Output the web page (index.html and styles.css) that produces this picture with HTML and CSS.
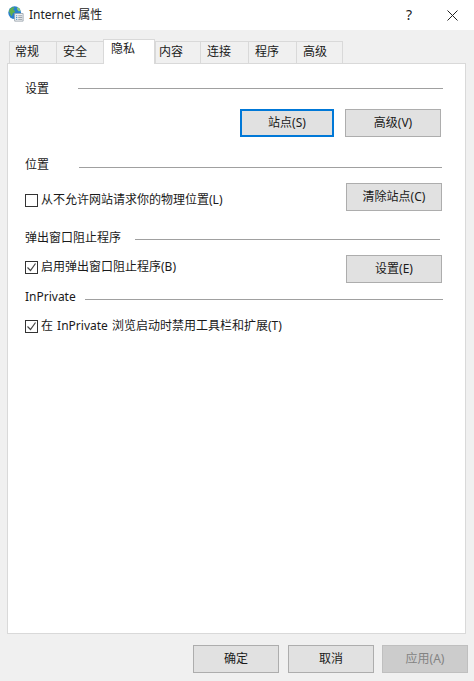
FILE: index.html
```html
<!DOCTYPE html>
<html lang="zh-CN">
<head>
<meta charset="utf-8">
<title>Internet 属性</title>
<link rel="stylesheet" href="styles.css">
</head>
<body>
<div class="dialog">
  <header class="titlebar">
    <svg class="app-icon" width="16" height="16" viewBox="0 0 18 18">
      <circle cx="7.500" cy="7.500" r="7.200" fill="#2a80cc"/>
      <path d="M3 2.500c1.500-1 3-1.500 4-1 .5 1-.5 2-1.500 2.500 1 1 2.500 1 2.500 2.500-1 1.500-2.500 1-3 2.500 0 1.500-.5 2.500-1.500 2-1-1.500-.8-3-2-4-.5-1.500 0-3 1.500-4.500z" fill="#5fb04c"/>
      <path d="M10 1.500c2 .5 3.500 2 4 4l-2 .5c-1-1-2-2-2-4.500z" fill="#8ecf72"/>
      <path d="M7.500 8.500h9.500v8.500H7.500z" fill="#f4f6f8" stroke="#9aa3ab"/>
      <path d="M9 11h1.500M9 13h1.500M9 15h1.500" stroke="#2b7fc4"/>
      <path d="M11.500 11H16M11.500 13H16M11.500 15H16" stroke="#8b949c"/>
    </svg>
    <span class="title-text">Internet 属性</span>
    <span class="help">?</span>
    <svg class="close" width="11" height="11" viewBox="0 0 11 11"><path d="M.5.500l10 10M10.500.500l-10 10" stroke="#222" fill="none"/></svg>
  </header>

  <nav class="tabs">
    <span class="tab tab-first">常规</span>
    <span class="tab tab-a">安全</span>
    <span class="tab tab-active">隐私</span>
    <span class="tab tab-b">内容</span>
    <span class="tab tab-wide">连接</span>
    <span class="tab tab-wide">程序</span>
    <span class="tab tab-a">高级</span>
  </nav>

  <main class="panel">
    <section class="sec sec-settings">
      <div class="head"><span class="label">设置</span><span class="rule r1"></span></div>
      <div class="btn-row">
        <button class="btn btn-focus">站点(S)</button>
        <button class="btn btn-adv">高级(V)</button>
      </div>
    </section>

    <section class="sec sec-location">
      <div class="head"><span class="label">位置</span><span class="rule r2"></span></div>
      <div class="opt-row">
        <label class="check check-loc"><span class="box"></span>从不允许网站请求你的物理位置(L)</label>
        <button class="btn">清除站点(C)</button>
      </div>
    </section>

    <section class="sec sec-popup">
      <div class="head"><span class="label">弹出窗口阻止程序</span><span class="rule r3"></span></div>
      <div class="opt-row">
        <label class="check check-pop"><span class="box"><svg width="11" height="11" viewBox="0 0 11 11"><path d="M1.500 5.500l3 3 5-7" stroke="#444" stroke-width="1.200" fill="none"/></svg></span>启用弹出窗口阻止程序(B)</label>
        <button class="btn">设置(E)</button>
      </div>
    </section>

    <section class="sec sec-private">
      <div class="head"><span class="label">InPrivate</span><span class="rule r4"></span></div>
      <label class="check check-priv"><span class="box"><svg width="11" height="11" viewBox="0 0 11 11"><path d="M1.500 5.500l3 3 5-7" stroke="#444" stroke-width="1.200" fill="none"/></svg></span>在 InPrivate 浏览启动时禁用工具栏和扩展(T)</label>
    </section>
  </main>

  <footer class="footer">
    <button class="btn btn-foot">确定</button>
    <button class="btn btn-foot">取消</button>
    <button class="btn btn-foot btn-disabled" disabled>应用(A)</button>
  </footer>
</div>
</body>
</html>
```

FILE: styles.css
```css
* { box-sizing: border-box; }
html, body { margin: 0; padding: 0; }
body {
  width: 474px;
  height: 681px;
  overflow: hidden;
  font: 12px/16px "Noto Sans", "Noto Sans CJK SC", sans-serif;
  color: #1a1a1a;
  background: #f0f0f0;
}
.dialog { display: flex; flex-direction: column; height: 681px; }

.titlebar {
  flex: none;
  height: 30px;
  background: #fff;
  display: flex;
  align-items: center;
  padding: 0 16px 0 8px;
}
.app-icon { flex: none; margin: 0 5px 2px 0; }
.title-text { flex: 1; color: #222; }
.help { font-size: 14px; color: #222; margin-right: 35px; }
.close { flex: none; }

.tabs {
  flex: none;
  height: 33px;
  padding-left: 9px;
  display: flex;
  align-items: flex-end;
  position: relative;
  z-index: 1;
}
.tab {
  height: 22px;
  border: 1px solid #d9d9d9;
  border-right: 0;
  border-bottom: 0;
  padding: 2px 0 0 6px;
  background: #f0f0f0;
}
.tab-first { width: 47px; padding-left: 5px; }
.tab-a { width: 47px; }
.tab-wide { width: 48px; }
.tab-b { width: 45px; padding-left: 3px; }
.tab:last-child { border-right: 1px solid #d9d9d9; }
.tab-active {
  width: 52px;
  height: 25px;
  background: #fff;
  border-right: 1px solid #d9d9d9;
  padding: 1px 0 0 7px;
  margin-bottom: -1px;
}

.panel {
  flex: none;
  width: 459px;
  height: 571px;
  margin-left: 7px;
  background: #fff;
  border: 1px solid #d9d9d9;
  padding: 17px 0 0 17px;
}
.head { display: flex; height: 16px; }
.label { flex: none; }
.rule { flex: none; height: 1px; background: #a0a0a0; }
.r1 { width: 365px; margin: 7px 0 0 29px; }
.r2 { width: 363px; margin: 10px 0 0 30px; }
.r3 { width: 305px; margin: 9px 0 0 14px; }
.r4 { width: 358px; margin: 10px 0 0 9px; }

.btn {
  width: 96px;
  height: 28px;
  border: 1px solid #adadad;
  background: #e1e1e1;
  color: #1a1a1a;
  font: inherit;
  padding: 0;
}
.btn-row { display: flex; margin: 12px 0 0 215px; }
.btn-focus { width: 94px; border: 2px solid #0078d7; }
.btn-adv { margin-left: 11px; }

.sec-location { margin-top: 20px; }
.sec-popup { margin-top: 19px; }
.sec-private { margin-top: 6px; }

.opt-row { display: flex; justify-content: space-between; width: 417px; margin-top: 10px; }
.sec-popup .opt-row { margin-top: 9px; }

.check { display: flex; align-items: center; height: 16px; }
.check-loc { margin-top: 9px; }
.check-pop { margin-top: 4px; }
.check-priv { margin-top: 13px; word-spacing: 1px; }
.box {
  flex: none;
  width: 13px;
  height: 13px;
  border: 1px solid #333;
  background: #fff;
  margin-right: 3px;
  display: flex;
}

.footer {
  flex: none;
  display: flex;
  justify-content: flex-end;
  padding: 11px 6px 0 0;
}
.btn-foot { width: 86px; margin-left: 9px; }
.btn-foot:last-child { margin-left: 8px; }
.btn-disabled { background: #ccc; border-color: #bfbfbf; color: #838383; }
```
